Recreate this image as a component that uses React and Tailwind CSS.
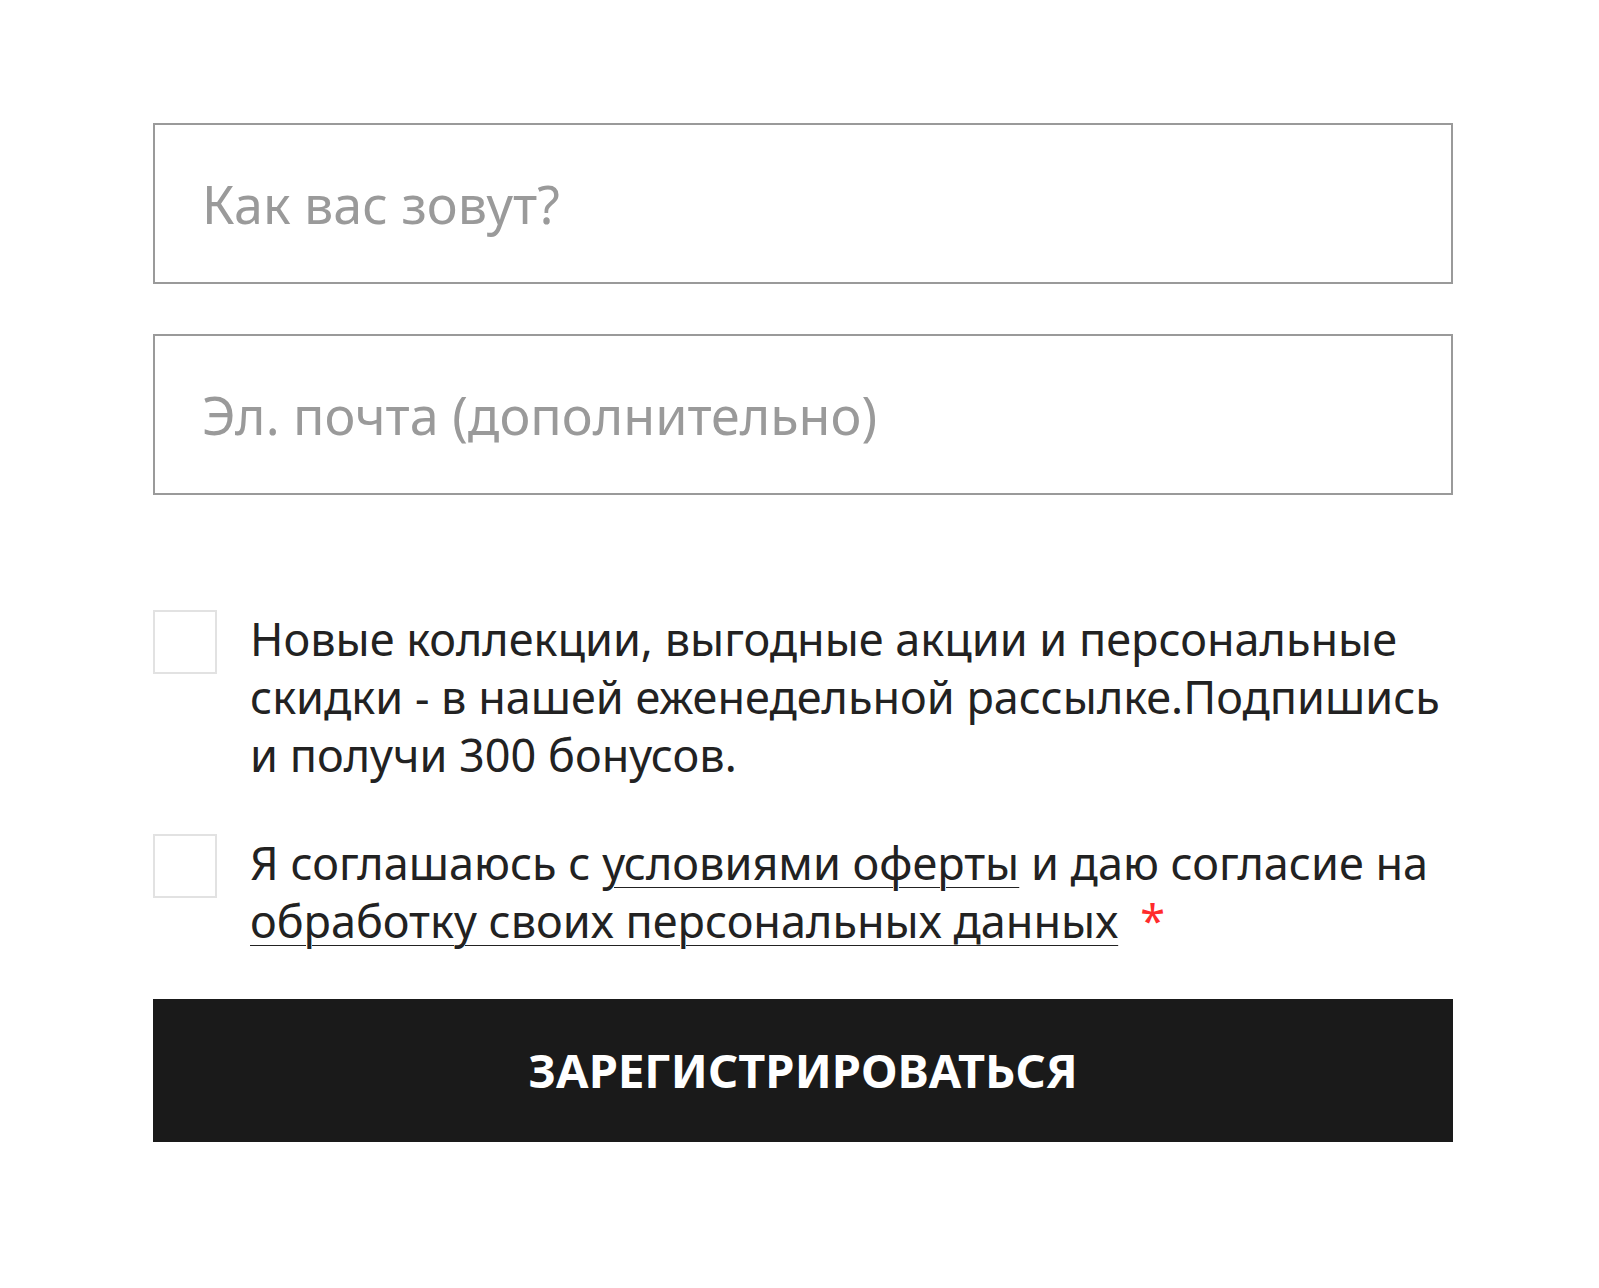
import React, { useState } from 'react';

const font = { fontFamily: '"Noto Sans", "Open Sans", sans-serif' };

const Field = ({ placeholder }) => (
  <input
    type="text"
    placeholder={placeholder}
    className="block w-full h-[161px] border-2 border-[#9a9a9a] bg-white px-[47px] text-[52px] text-[#222] placeholder:text-[#9a9a9a] outline-none"
    style={font}
  />
);

const Box = ({ checked, onChange }) => (
  <button
    type="button"
    onClick={onChange}
    className="flex h-[64px] w-[64px] shrink-0 items-center justify-center border-2 border-[#e2e2e2] bg-white"
  >
    {checked && <span className="text-[36px] leading-none text-[#1a1a1a]">✓</span>}
  </button>
);

export default function App() {
  const [news, setNews] = useState(false);
  const [terms, setTerms] = useState(false);

  return (
    <div className="min-h-[1288px] w-full bg-white" style={font}>
      <form className="ml-[153px] w-[1300px] pt-[123px]">
        <div className="flex flex-col gap-[50px]">
          <Field placeholder="Как вас зовут?" />
          <Field placeholder="Эл. почта (дополнительно)" />
        </div>

        <div className="mt-[115px] flex gap-[33px]">
          <Box checked={news} onChange={() => setNews(!news)} />
          <p className="text-[45px] leading-[58px] text-[#222]">
            Новые коллекции, выгодные акции и персональные
            <br />
            скидки - в нашей еженедельной рассылке.Подпишись
            <br />
            и получи 300 бонусов.
          </p>
        </div>

        <div className="mt-[50px] flex gap-[33px]">
          <Box checked={terms} onChange={() => setTerms(!terms)} />
          <p className="text-[45px] leading-[58px] text-[#222]">
            Я соглашаюсь с{' '}
            <a href="#" className="underline decoration-1 underline-offset-[7px]">условиями оферты</a> и даю согласие на
            <br />
            <a href="#" className="underline decoration-1 underline-offset-[7px]">обработку своих персональных данных</a>
            <span className="ml-[22px] text-[#ff2b2b]">*</span>
          </p>
        </div>

        <button
          type="button"
          className="mt-[49px] flex h-[143px] w-full items-center justify-center bg-[#1a1a1a] text-[47px] font-bold uppercase text-white"
        >
          Зарегистрироваться
        </button>
      </form>
    </div>
  );
}
